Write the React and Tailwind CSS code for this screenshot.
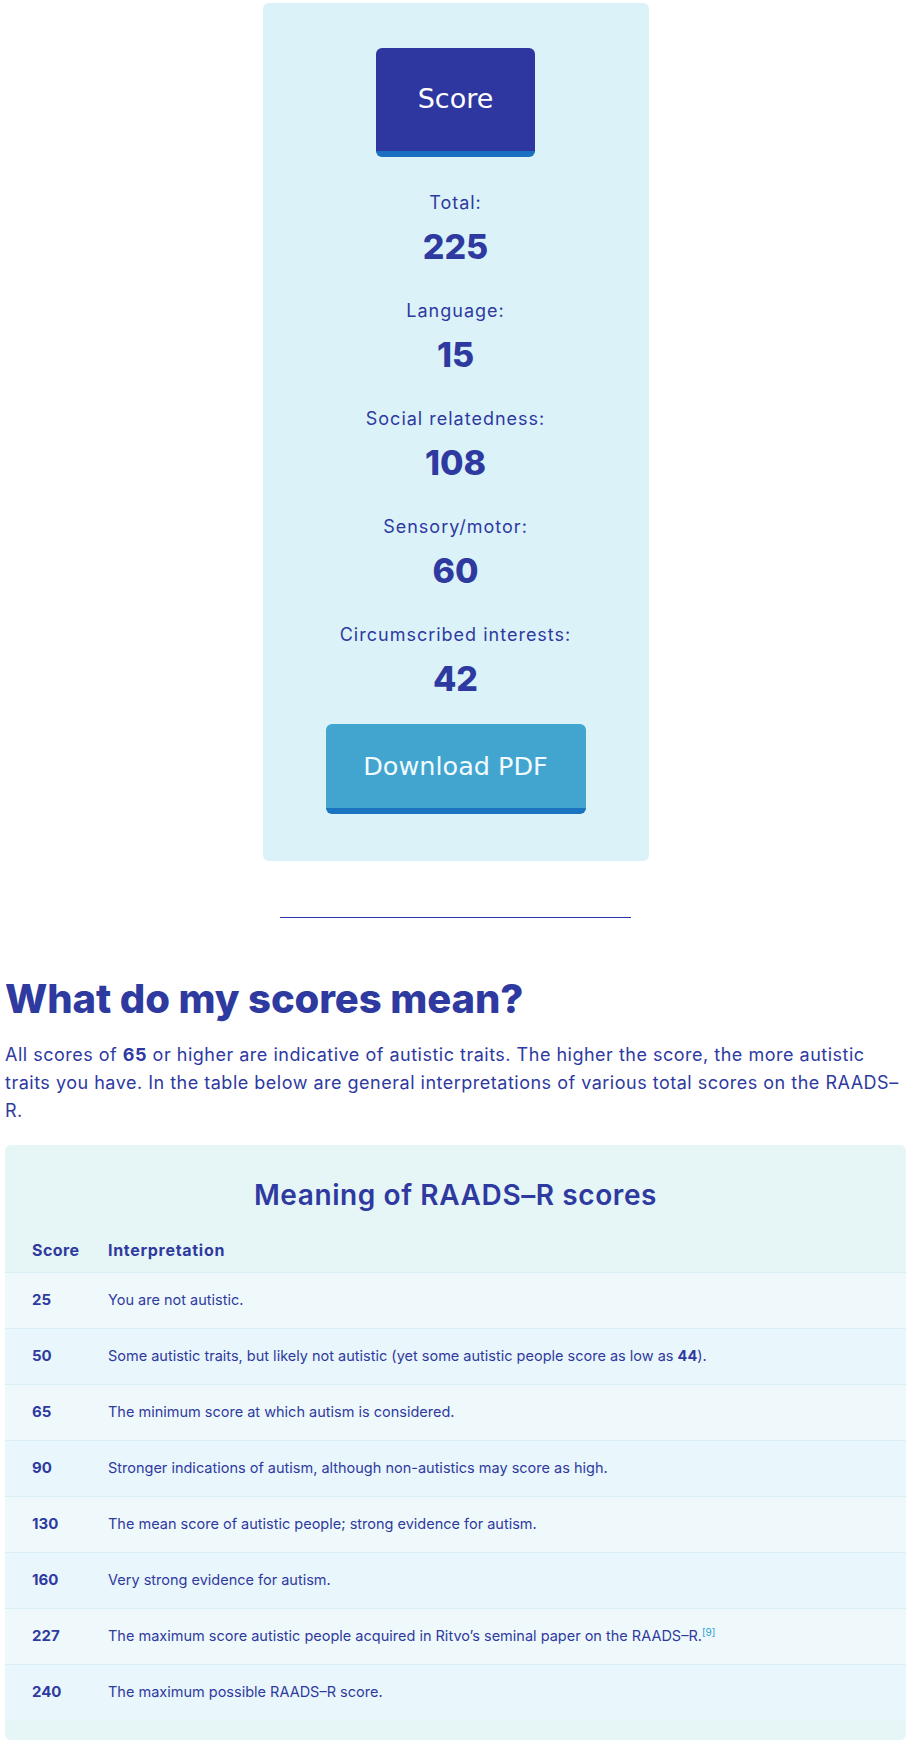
import React from 'react';

const scores = [
  { label: 'Total:', value: 225 },
  { label: 'Language:', value: 15 },
  { label: 'Social relatedness:', value: 108 },
  { label: 'Sensory/motor:', value: 60 },
  { label: 'Circumscribed interests:', value: 42 },
];

const rows = [
  { score: 25, text: 'You are not autistic.' },
  {
    score: 50,
    text: (
      <>
        Some autistic traits, but likely not autistic (yet some autistic people score as low as{' '}
        <strong className="font-bold">44</strong>).
      </>
    ),
  },
  { score: 65, text: 'The minimum score at which autism is considered.' },
  { score: 90, text: 'Stronger indications of autism, although non-autistics may score as high.' },
  { score: 130, text: 'The mean score of autistic people; strong evidence for autism.' },
  { score: 160, text: 'Very strong evidence for autism.' },
  {
    score: 227,
    text: (
      <>
        The maximum score autistic people acquired in Ritvo’s seminal paper on the RAADS–R.
        <sup className="text-[10px] text-[#2a9fd0] relative -top-[5px] align-baseline leading-none">[9]</sup>
      </>
    ),
  },
  { score: 240, text: 'The maximum possible RAADS–R score.' },
];

export default function App() {
  return (
    <div className="min-h-screen bg-white px-[5px] text-[#2e3aa0] font-['Inter',sans-serif]">
      {/* result card */}
      <div className="mx-auto w-[386px] mt-[3px] bg-[#dcf2f9] rounded-md pt-[45px] pb-[47px] flex flex-col items-center">
        <button className="w-[159px] h-[109px] bg-[#2e37a0] rounded-md border-b-[6px] border-[#1a6fc0] text-white text-[27px] font-['DejaVu_Sans',sans-serif]">
          Score
        </button>

        <div className="mt-[33px] flex flex-col items-center w-full">
          {scores.map((s) => (
            <div key={s.label} className="h-[108px] flex flex-col items-center">
              <div className="text-[18px] leading-[26px] tracking-[1px]">{s.label}</div>
              <div className="text-[34px] font-extrabold leading-[40px] mt-[11px]">{s.value}</div>
            </div>
          ))}
        </div>

        <button className="mt-[-6px] w-[260px] h-[90px] bg-[#42a5cf] rounded-md border-b-[6px] border-[#1a74c0] text-[#f2fbff] text-[25.5px] font-['DejaVu_Sans',sans-serif]">
          Download PDF
        </button>
      </div>

      <hr className="mx-auto mt-[56px] w-[351px] border-0 border-t border-[#2a35a8]" />

      <h2 className="mt-[58px] text-[40px] font-extrabold leading-[46px] tracking-[-0.1px]">
        What do my scores mean?
      </h2>

      <p className="mt-[19px] text-[18px] leading-[28px] tracking-[0.5px]">
        All scores of <strong className="font-bold">65</strong> or higher are indicative of autistic traits. The
        higher the score, the more autistic traits you have. In the table below are general interpretations of various
        total scores on the RAADS–R.
      </p>

      {/* table */}
      <div className="mt-[20px] mb-[7px] bg-[#e6f5f6] rounded-md pb-[20px] overflow-hidden">
        <div className="text-center text-[28px] font-semibold pt-[32px] leading-[36px] tracking-[0.6px]">
          Meaning of RAADS–R scores
        </div>
        <table className="w-full mt-[19px] border-collapse">
          <thead>
            <tr className="border-b border-[#d9eef5]">
              <th className="text-left font-bold text-[16px] tracking-[0.4px] pl-[27px] pr-0 w-[103px] h-[40px] pb-[4px]">
                Score
              </th>
              <th className="text-left font-bold text-[16px] tracking-[0.7px] pb-[4px]">Interpretation</th>
            </tr>
          </thead>
          <tbody>
            {rows.map((r, i) => (
              <tr
                key={r.score}
                className={`${i % 2 === 0 ? 'bg-[#eff9fc]' : 'bg-[#e9f6fc]'} ${i < rows.length - 1 ? 'border-b border-[#d9eef5]' : ''}`}
              >
                <td className="pl-[27px] h-[56px] text-[15px] font-bold">{r.score}</td>
                <td className="text-[14.5px] tracking-[0px]">{r.text}</td>
              </tr>
            ))}
          </tbody>
        </table>
      </div>
    </div>
  );
}
